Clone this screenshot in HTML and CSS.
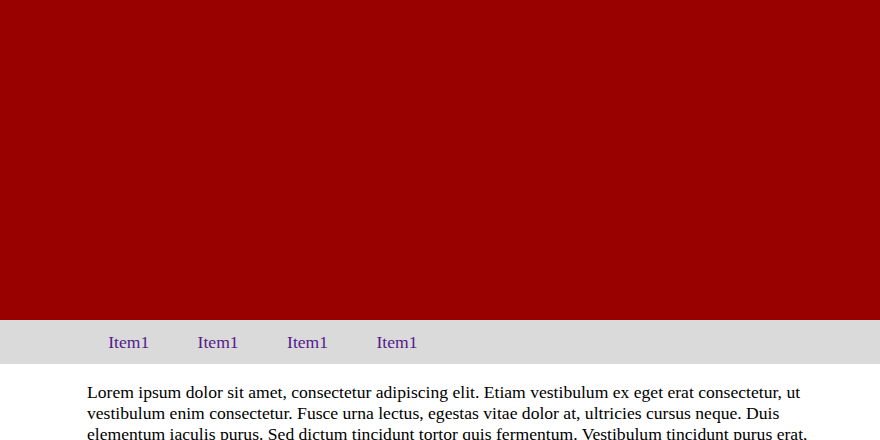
FILE: index.html
```html
<!DOCTYPE html>
<html>
<head>
<meta charset="utf-8">
<link rel="stylesheet" href="styles.css">
</head>
<body>
<header class="hero"></header>
<nav class="nav">
  <ul class="nav-list">
    <li><a class="nav-link" href="#">Item1</a></li>
    <li><a class="nav-link" href="#">Item1</a></li>
    <li><a class="nav-link" href="#">Item1</a></li>
    <li><a class="nav-link" href="#">Item1</a></li>
  </ul>
</nav>
<main class="content">
  <p class="text">Lorem ipsum dolor sit amet, consectetur adipiscing elit. Etiam vestibulum ex eget erat consectetur, ut vestibulum enim consectetur. Fusce urna lectus, egestas vitae dolor at, ultricies cursus neque. Duis elementum iaculis purus. Sed dictum tincidunt tortor quis fermentum. Vestibulum tincidunt purus erat, pellentesque pretium lorem placerat non. Nulla facilisi. Donec tempus nibh vel mauris commodo, at mollis nisl hendrerit.</p>
</main>
</body>
</html>
```
FILE: styles.css
```css
html, body {
  margin: 0;
  padding: 0;
}
body {
  font-family: "Liberation Serif", "Times New Roman", serif;
  font-size: 17.6px;
  color: #000;
  background: #fff;
}
.hero {
  height: 320px;
  background: #990000;
}
.nav {
  background: #dadada;
  height: 44px;
}
.nav-list {
  list-style: none;
  margin: 0 0 0 84px;
  padding: 0;
  display: flex;
  height: 44px;
  align-items: center;
}
.nav-link {
  display: block;
  padding: 0 24.2px;
  color: #551a8b;
  text-decoration: none;
}
.content {
  width: 726px;
  margin-left: 87px;
}
.text {
  margin: 1em 0;
}
```
